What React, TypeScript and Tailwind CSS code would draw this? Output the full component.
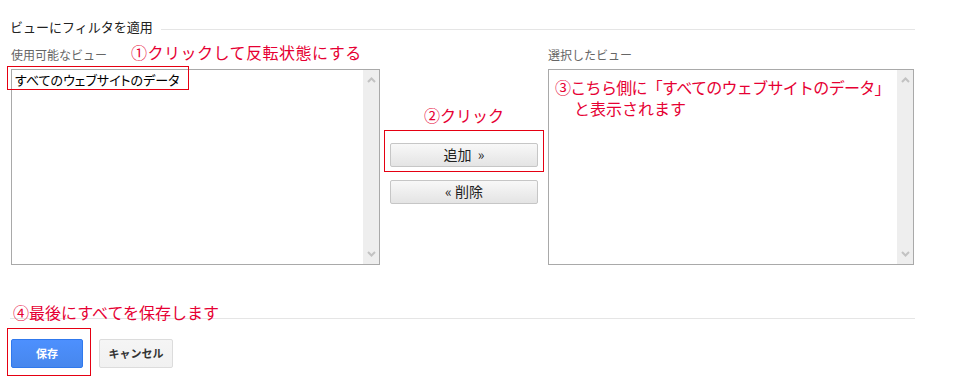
const jp = "font-['Noto_Sans_CJK_JP','Noto_Sans',sans-serif]";

function ScrollArrows() {
  return (
    <div className="absolute right-0 top-0 bottom-0 w-[16px] bg-[#eeeeee] flex flex-col items-center justify-between py-[7px]">
      <svg width="9" height="6" viewBox="0 0 9 6">
        <polyline points="1,5 4.5,1.5 8,5" fill="none" stroke="#c2c2c2" strokeWidth="2" />
      </svg>
      <svg width="9" height="6" viewBox="0 0 9 6">
        <polyline points="1,1 4.5,4.5 8,1" fill="none" stroke="#c2c2c2" strokeWidth="2" />
      </svg>
    </div>
  );
}

function ListBox({ children }: { children?: React.ReactNode }) {
  return (
    <div className="relative h-[196px] border border-[#a9a9a9] bg-white">
      {children}
      <ScrollArrows />
    </div>
  );
}

export default function App() {
  return (
    <div className={`relative w-[959px] h-[385px] bg-white overflow-hidden ${jp}`}>
      <div className="pl-[10px] pr-[44px] pt-[19px]">
        {/* Section heading */}
        <div className="flex items-end">
          <span className="text-[13px] leading-[16px] text-[#222]">ビューにフィルタを適用</span>
          <div className="flex-1 h-px bg-[#e5e5e5] ml-[8px] mb-[5px]" />
        </div>

        {/* Lists */}
        <div className="flex gap-[10px] pl-px mt-[7px]">
          <div className="w-[369px]">
            <div className="flex items-end h-[20px] mb-[7px]">
              <span className="text-[12px] leading-[14px] text-[#666]">使用可能なビュー</span>
              <span className="ml-[24px] text-[16px] leading-[20px] tracking-[0.5px] text-[#e60033]">
                ①クリックして反転状態にする
              </span>
            </div>
            <ListBox>
              <div className="pl-[3px] pt-[1px] text-[13px] leading-[18px] text-black [font-feature-settings:'palt']">
                すべてのウェブサイトのデータ
              </div>
            </ListBox>
          </div>

          <div className="w-[148px] flex flex-col">
            <div className="mt-[63px] text-center text-[16px] leading-[20px] text-[#e60033]">②クリック</div>
            <div className="relative mt-[16px]">
              <div className="absolute left-[-6px] top-[-11px] w-[160px] h-[42px] border border-[#e50012]" />
              <button className="relative w-full h-[24px] rounded-[2px] border border-[#c6c6c6] bg-gradient-to-b from-[#f8f8f8] to-[#e4e4e4] text-[14px] text-[#222]">
                追加 &nbsp;»
              </button>
            </div>
            <button className="mt-[13px] w-full h-[24px] rounded-[2px] border border-[#c6c6c6] bg-gradient-to-b from-[#f8f8f8] to-[#e4e4e4] text-[14px] text-[#222]">
              « 削除
            </button>
          </div>

          <div className="w-[366px]">
            <div className="flex items-end h-[20px] mb-[7px]">
              <span className="text-[12px] leading-[14px] text-[#666]">選択したビュー</span>
            </div>
            <ListBox>
              <div className="pl-[6px] pt-[7px] text-[16px] leading-[21px] text-[#e60033] whitespace-nowrap">
                <div className="tracking-[-0.7px]">③こちら側に「すべてのウェブサイトのデータ」</div>
                <div className="pl-[19px]">と表示されます</div>
              </div>
            </ListBox>
          </div>
        </div>

        {/* Footer */}
        <div className="mt-[37px] h-[17px] border-b border-[#e5e5e5]">
          <span className="block pl-[3px] text-[16px] leading-[20px] text-[#e60033]">④最後にすべてを保存します</span>
        </div>
        <div className="flex gap-[16px] pl-px mt-[20px]">
          <div className="relative">
            <div className="absolute left-[-4px] top-[-11px] w-[84px] h-[48px] border border-[#e50012]" />
            <button className="relative w-[72px] h-[29px] rounded-[2px] border border-[#3079ed] bg-gradient-to-b from-[#4d90fe] to-[#4787ed] text-[11px] font-bold text-white">
              保存
            </button>
          </div>
          <button className="w-[74px] h-[29px] rounded-[2px] border border-[#dcdcdc] bg-gradient-to-b from-[#f5f5f5] to-[#f1f1f1] text-[11px] font-bold text-[#333]">
            キャンセル
          </button>
        </div>
      </div>

      {/* Highlight around the first list item (drawn over the list border) */}
      <div className="absolute left-[7px] top-[66px] w-[182px] h-[24px] border border-[#e50012]" />
    </div>
  );
}
